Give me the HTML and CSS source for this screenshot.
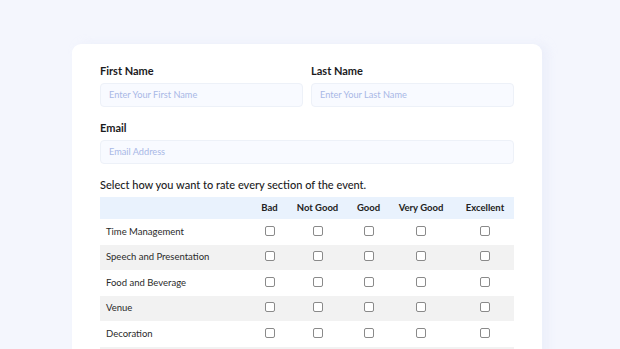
FILE: index.html
```html
<!DOCTYPE html>
<html>
<head>
<meta charset="utf-8">
<link rel="stylesheet" href="styles.css">
</head>
<body>
<div class="card">
  <div class="name-grid">
    <div class="field">
      <label class="label">First Name</label>
      <div class="input">Enter Your First Name</div>
    </div>
    <div class="field">
      <label class="label">Last Name</label>
      <div class="input">Enter Your Last Name</div>
    </div>
  </div>
  <div class="field email">
    <label class="label">Email</label>
    <div class="input">Email Address</div>
  </div>
  <p class="question">Select how you want to rate every section of the event.</p>
  <table class="rating">
    <colgroup>
      <col class="c-label"><col class="c-bad"><col class="c-ng"><col class="c-good"><col class="c-vg"><col class="c-ex">
    </colgroup>
    <thead>
      <tr><th></th><th>Bad</th><th>Not Good</th><th>Good</th><th>Very Good</th><th>Excellent</th></tr>
    </thead>
    <tbody>
      <tr><td>Time Management</td><td><span class="box"></span></td><td><span class="box"></span></td><td><span class="box"></span></td><td><span class="box"></span></td><td><span class="box"></span></td></tr>
      <tr class="alt"><td>Speech and Presentation</td><td><span class="box"></span></td><td><span class="box"></span></td><td><span class="box"></span></td><td><span class="box"></span></td><td><span class="box"></span></td></tr>
      <tr><td>Food and Beverage</td><td><span class="box"></span></td><td><span class="box"></span></td><td><span class="box"></span></td><td><span class="box"></span></td><td><span class="box"></span></td></tr>
      <tr class="alt"><td>Venue</td><td><span class="box"></span></td><td><span class="box"></span></td><td><span class="box"></span></td><td><span class="box"></span></td><td><span class="box"></span></td></tr>
      <tr><td>Decoration</td><td><span class="box"></span></td><td><span class="box"></span></td><td><span class="box"></span></td><td><span class="box"></span></td><td><span class="box"></span></td></tr>
      <tr class="alt"><td></td><td></td><td></td><td></td><td></td><td></td></tr>
    </tbody>
  </table>
</div>
</body>
</html>
```
FILE: styles.css
```css
html, body {
  margin: 0;
  padding: 0;
  background: #f4f6fd;
  overflow: hidden;
  height: 349px;
}
body {
  font-family: "Lato", "Inter", sans-serif;
  color: #1d1d1f;
}
.card {
  margin: 44px 0 0 72px;
  width: 470px;
  box-sizing: border-box;
  padding: 20px 28px 40px;
  background: #ffffff;
  border-radius: 9px;
  box-shadow: 6px 0 10px rgba(220, 226, 245, 0.35);
  min-height: 340px;
}
.name-grid {
  display: grid;
  grid-template-columns: 1fr 1fr;
  column-gap: 8px;
}
.field {
  display: flex;
  flex-direction: column;
}
.label {
  font-size: 11px;
  font-weight: 700;
  line-height: 14px;
  height: 14px;
  margin-bottom: 5px;
  color: #1b1b1d;
}
.input {
  height: 24px;
  box-sizing: border-box;
  border: 1px solid #edf1f8;
  background: #f8faff;
  border-radius: 4px;
  padding-left: 8px;
  font-size: 9.2px;
  line-height: 22px;
  color: #a8b8e6;
}
.email {
  margin-top: 14px;
}
.question {
  margin: 14px 0 5px;
  font-size: 11px;
  font-weight: 500;
  line-height: 14px;
  color: #1b1b1d;
}
.rating {
  width: 414px;
  border-collapse: collapse;
  table-layout: fixed;
}
.c-label { width: 146px; }
.c-bad { width: 47px; }
.c-ng { width: 49px; }
.c-good { width: 53px; }
.c-vg { width: 52px; }
.c-ex { width: 67px; }
.rating thead tr {
  background: #e9f2fd;
}
.rating th {
  height: 22px;
  padding: 0;
  font-size: 9.5px;
  font-weight: 700;
  line-height: 12px;
  color: #222;
  text-align: center;
  white-space: nowrap;
}
.rating td {
  height: 25.5px;
  padding: 0;
  text-align: center;
  vertical-align: middle;
  line-height: 12px;
  font-size: 9.5px;
}
.rating th:last-child,
.rating td:last-child {
  padding-left: 9px;
}
.rating td:first-child {
  text-align: left;
  padding-left: 6px;
  color: #2a2a2a;
  white-space: nowrap;
}
.rating tr.alt {
  background: #f2f2f2;
}
.box {
  display: block;
  margin: 0 auto;
  width: 8px;
  height: 8px;
  border: 1px solid #8a8a8a;
  border-radius: 2px;
  background: #fff;
  position: relative;
  top: -1px;
}
```
